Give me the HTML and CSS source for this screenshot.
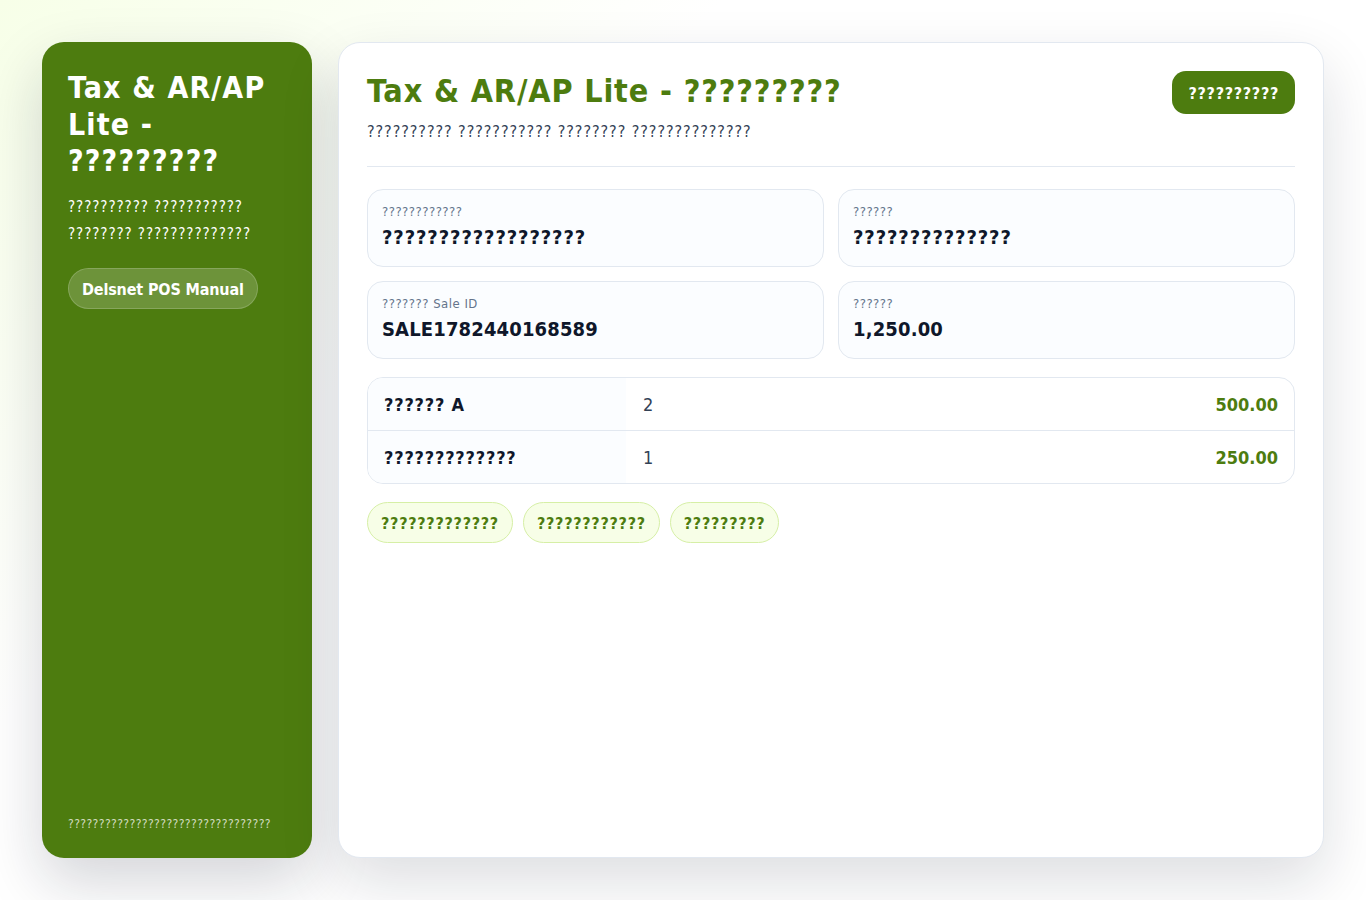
FILE: index.html
```html
<!DOCTYPE html>
<html lang="en">

<head>
    <meta charset="UTF-8" />
    <meta name="viewport" content="width=device-width, initial-scale=1.0" />
    <title>Tax &amp; AR/AP Lite</title>
    <link rel="stylesheet" href="styles.css">
</head>

<body>
    <div class="layout">
        <aside class="sidebar">
            <h2 class="side-title">Tax &amp; AR/AP Lite - ?????????</h2>
            <p class="side-text">?????????? ??????????? ???????? ??????????????</p>
            <a class="side-link" href="#">Delsnet POS Manual</a>
            <div class="side-foot">?????????????????????????????????</div>
        </aside>

        <main class="content">
            <header class="top">
                <div>
                    <h1 class="title">Tax &amp; AR/AP Lite - ?????????</h1>
                    <p class="subtitle">?????????? ??????????? ???????? ??????????????</p>
                </div>
                <button class="print-btn">??????????</button>
            </header>

            <section class="cards">
                <div class="card">
                    <div class="card-label">????????????</div>
                    <div class="card-value wide">??????????????????</div>
                </div>
                <div class="card">
                    <div class="card-label">??????</div>
                    <div class="card-value wide">??????????????</div>
                </div>
                <div class="card">
                    <div class="card-label">??????? Sale ID</div>
                    <div class="card-value">SALE1782440168589</div>
                </div>
                <div class="card">
                    <div class="card-label">??????</div>
                    <div class="card-value">1,250.00</div>
                </div>
            </section>

            <div class="items">
                <div class="item">
                    <div class="item-name">?????? A</div>
                    <div class="item-qty">2</div>
                    <div class="item-amount">500.00</div>
                </div>
                <div class="item">
                    <div class="item-name">?????????????</div>
                    <div class="item-qty">1</div>
                    <div class="item-amount">250.00</div>
                </div>
            </div>

            <div class="chips">
                <span class="chip">?????????????</span>
                <span class="chip">????????????</span>
                <span class="chip">?????????</span>
            </div>
        </main>
    </div>
</body>

</html>
```
FILE: styles.css
```css
* {
    margin: 0;
    padding: 0;
    box-sizing: border-box;
}

body {
    height: 900px;
    overflow: hidden;
    font-family: "DejaVu Sans Condensed", "DejaVu Sans", sans-serif;
    color: #0f172a;
    background: linear-gradient(135deg, #f7ffe8 0%, #ffffff 32%, #ffffff 100%);
}

.layout {
    height: 900px;
    padding: 42px;
    display: grid;
    grid-template-columns: 270px 1fr;
    gap: 26px;
}

.sidebar {
    background-color: #4d7c0f;
    color: #ffffff;
    border-radius: 22px;
    padding: 28px 26px 26px;
    display: flex;
    flex-direction: column;
    align-items: flex-start;
    box-shadow: 0 24px 60px rgba(15, 23, 42, 0.18);
}

.side-title {
    font-size: 30px;
    line-height: 36.5px;
    font-weight: 700;
    letter-spacing: 1.15px;
}

.side-text {
    margin-top: 14px;
    font-size: 15px;
    line-height: 27px;
    letter-spacing: 0.92px;
}

.side-link {
    margin-top: 20px;
    padding: 0 13px;
    height: 41px;
    line-height: 41px;
    border-radius: 999px;
    border: 1px solid rgba(255, 255, 255, 0.18);
    background-color: rgba(255, 255, 255, 0.18);
    color: #ffffff;
    font-size: 16px;
    font-weight: 700;
    letter-spacing: -0.15px;
    text-decoration: none;
}

.side-foot {
    margin-top: auto;
    font-size: 12px;
    line-height: 16px;
    letter-spacing: 0.42px;
    color: rgba(255, 255, 255, 0.75);
}

.content {
    background-color: #ffffff;
    border: 1px solid #e2e8f0;
    border-radius: 22px;
    padding: 28px;
    box-shadow: 0 24px 60px rgba(15, 23, 42, 0.14);
}

.top {
    display: flex;
    justify-content: space-between;
    align-items: flex-start;
    padding-bottom: 22px;
    margin-bottom: 22px;
    border-bottom: 1px solid #e2e8f0;
}

.title {
    font-size: 32px;
    line-height: 41px;
    font-weight: 700;
    letter-spacing: 0.85px;
    color: #4d7c0f;
}

.subtitle {
    margin-top: 8px;
    font-size: 16px;
    line-height: 24px;
    letter-spacing: 0.92px;
    color: #334155;
}

.print-btn {
    height: 43px;
    padding: 2px 16px 0;
    border: none;
    border-radius: 14px;
    background-color: #4d7c0f;
    color: #ffffff;
    font-family: inherit;
    font-size: 16px;
    font-weight: 700;
    letter-spacing: 0.7px;
}

.cards {
    display: grid;
    grid-template-columns: 1fr 1fr;
    gap: 14px;
}

.card {
    height: 78px;
    padding: 14px 14px 0;
    background-color: #fbfdff;
    border: 1px solid #e2e8f0;
    border-radius: 16px;
}

.card-label {
    font-size: 13px;
    line-height: 16px;
    letter-spacing: 0.5px;
    color: #64748b;
}

.card-value {
    margin-top: 4px;
    font-size: 20px;
    line-height: 26px;
    font-weight: 700;
    letter-spacing: 0.15px;
}

.card-value.wide {
    letter-spacing: 0.9px;
}

.items {
    margin-top: 18px;
    border: 1px solid #e2e8f0;
    border-radius: 16px;
    overflow: hidden;
}

.item {
    display: grid;
    grid-template-columns: 258px 1fr auto;
    height: 53px;
    align-items: center;
    border-bottom: 1px solid #e2e8f0;
    font-size: 18px;
}

.item:last-child {
    height: 52px;
    border-bottom: none;
}

.item-name {
    height: 100%;
    display: flex;
    align-items: center;
    padding-left: 16px;
    background-color: #fbfdff;
    font-weight: 700;
    letter-spacing: 0.8px;
}

.item-qty {
    padding-left: 17px;
    color: #334155;
}

.item-amount {
    padding-right: 16px;
    color: #4d7c0f;
    font-weight: 700;
}

.chips {
    margin-top: 18px;
    display: flex;
    gap: 10px;
}

.chip {
    height: 41px;
    line-height: 41px;
    padding: 0 13px;
    background-color: #f7fee7;
    border: 1px solid #d6efa6;
    border-radius: 999px;
    color: #4d7c0f;
    font-size: 16px;
    font-weight: 700;
    letter-spacing: 0.72px;
}
```
